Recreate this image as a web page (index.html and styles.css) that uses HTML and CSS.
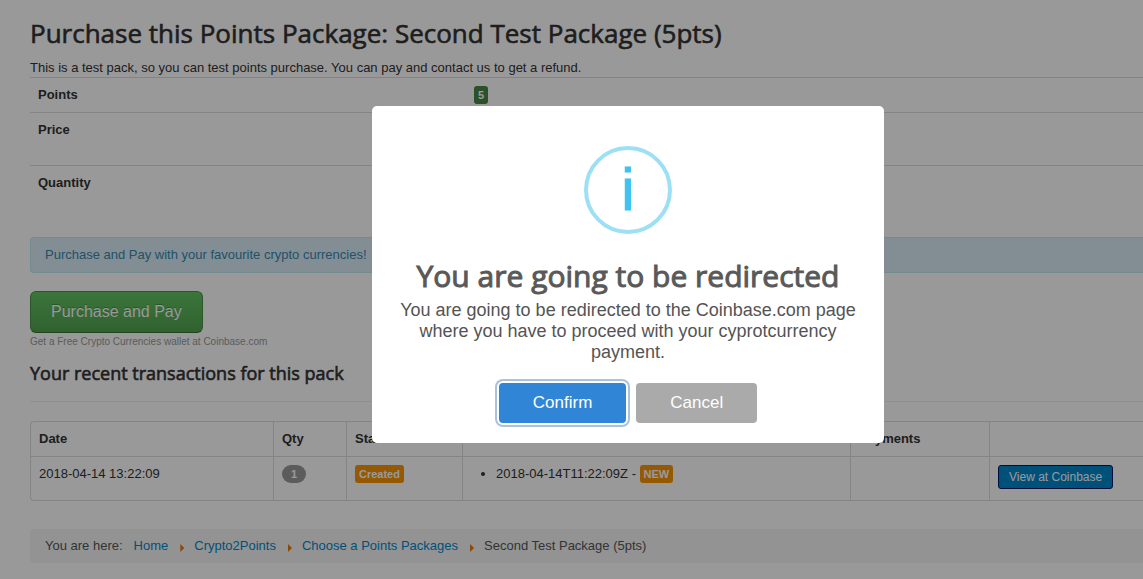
FILE: index.html
```html
<!DOCTYPE html>
<html lang="en">
	<head>
		<meta charset="utf-8">
		<title>Purchase this Points Package</title>
		<link rel="stylesheet" href="styles.css">
	</head>
	<body>
		<main class="content">
			<h2>Purchase this Points Package: Second Test Package (5pts)</h2>
			<p class="intro">This is a test pack, so you can test points purchase. You can pay and contact us to get a refund.</p>

			<table class="details">
				<tr>
					<th scope="row">Points</th>
					<td><span class="label label-success">5</span></td>
				</tr>
				<tr class="tall">
					<th scope="row">Price</th>
					<td></td>
				</tr>
				<tr class="tall">
					<th scope="row">Quantity</th>
					<td></td>
				</tr>
			</table>

			<div class="alert">Purchase and Pay with your favourite crypto currencies!</div>

			<button type="button" class="btn-pay">Purchase and Pay</button>
			<p class="hint">Get a Free Crypto Currencies wallet at Coinbase.com</p>

			<h4>Your recent transactions for this pack</h4>
			<hr>

			<table class="transactions">
				<thead>
					<tr>
						<th class="col-date">Date</th>
						<th class="col-qty">Qty</th>
						<th class="col-status">Status</th>
						<th class="col-timeline">Timeline</th>
						<th class="col-payments">Payments</th>
						<th></th>
					</tr>
				</thead>
				<tbody>
					<tr>
						<td>2018-04-14 13:22:09</td>
						<td><span class="badge">1</span></td>
						<td><span class="label label-warning">Created</span></td>
						<td>
							<ul>
								<li>2018-04-14T11:22:09Z - <span class="label label-warning">NEW</span></li>
							</ul>
						</td>
						<td></td>
						<td><a href="#" class="btn-view">View at Coinbase</a></td>
					</tr>
				</tbody>
			</table>

			<nav class="breadcrumb">
				<span class="here">You are here:</span>
				<a href="#">Home</a>
				<i class="arrow"></i>
				<a href="#">Crypto2Points</a>
				<i class="arrow"></i>
				<a href="#">Choose a Points Packages</a>
				<i class="arrow"></i>
				<span>Second Test Package (5pts)</span>
			</nav>
		</main>

		<div class="overlay">
			<div class="modal" role="dialog" aria-labelledby="modal-title">
				<div class="modal-icon">i</div>
				<h2 class="modal-title" id="modal-title">You are going to be redirected</h2>
				<p class="modal-text">You are going to be redirected to the Coinbase.com page where you have to proceed with your cyprotcurrency payment.</p>
				<div class="modal-buttons">
					<button type="button" class="confirm">Confirm</button>
					<button type="button" class="cancel">Cancel</button>
				</div>
			</div>
		</div>
	</body>
</html>
```

FILE: styles.css
```css
* {
	box-sizing: border-box;
	margin: 0;
	padding: 0;
}

body {
	font: 13px/18px "Liberation Sans", Arial, sans-serif;
	color: #333;
	background-color: #fff;
}

a {
	color: #08c;
	text-decoration: none;
}

h2, h4 {
	font-family: "Open Sans", sans-serif;
	font-weight: 400;
	-webkit-text-stroke: 0.6px currentColor;
}

.content {
	padding: 15px 0 16px 30px;
}

.content h2 {
	font-size: 26px;
	line-height: 36px;
	margin-bottom: 8px;
}

table {
	width: 100%;
	border-collapse: separate;
	border-spacing: 0;
	table-layout: fixed;
}

th, td {
	padding: 8px;
	border-top: 1px solid #ddd;
	text-align: left;
	vertical-align: top;
}

/* package details */
.details {
	margin-bottom: 19px;
}

.details th {
	width: 436px;
}

.details .tall {
	height: 53px;
}

.label, .badge {
	display: inline-block;
	padding: 2px 4px;
	font-size: 11px;
	line-height: 14px;
	font-weight: bold;
	color: #fff;
	border-radius: 3px;
}

.label-success {
	background-color: #468847;
}

.label-warning {
	background-color: #f89406;
}

.badge {
	padding: 2px 9px;
	border-radius: 9px;
	background-color: #999;
}

.alert {
	padding: 8px 14px;
	margin-bottom: 18px;
	border: 1px solid #bce8f1;
	border-right: 0;
	border-radius: 4px 0 0 4px;
	background-color: #d9edf7;
	color: #3a87ad;
}

.btn-pay {
	display: block;
	padding: 10px 20px;
	font: 16px/20px "Liberation Sans", Arial, sans-serif;
	color: #fff;
	text-shadow: 0 -1px 0 rgba(0, 0, 0, 0.25);
	border: 1px solid #499249;
	border-bottom-color: #387038;
	border-radius: 6px;
	background: linear-gradient(to bottom, #62c462, #51a351);
}

.hint {
	font-size: 10px;
	color: #999;
}

h4 {
	font-size: 18px;
	line-height: 20px;
	margin: 12px 0 18px;
}

hr {
	border: 0;
	border-top: 1px solid #eee;
	margin-bottom: 19px;
}

/* transactions */
.transactions {
	border: 1px solid #ddd;
	border-width: 0 0 1px 1px;
	border-radius: 4px 0 0 4px;
	margin-bottom: 28px;
}

.transactions th + th, .transactions td + td {
	border-left: 1px solid #ddd;
}

.transactions th:first-child {
	border-top-left-radius: 4px;
}

.col-date {
	width: 242px;
}

.col-qty {
	width: 73px;
}

.col-status {
	width: 116px;
}

.col-timeline {
	width: 388px;
}

.col-payments {
	width: 139px;
}

.transactions ul {
	padding-left: 25px;
	margin-bottom: 9px;
}

.btn-view {
	display: inline-block;
	padding: 2px 10px;
	font-size: 12px;
	color: #fff;
	border: 1px solid #001a60;
	border-radius: 3px;
	background-color: #08c;
}

.breadcrumb {
	display: flex;
	padding: 8px 15px;
	border-radius: 4px 0 0 4px;
	background-color: #f5f5f5;
	color: #555;
}

.breadcrumb .here {
	margin-right: 11px;
}

.arrow {
	width: 4px;
	height: 8px;
	margin: 7px 10px 0 12px;
	background-color: #f07800;
	clip-path: polygon(0 0, 100% 50%, 0 100%);
}

/* dialog */
.overlay {
	position: fixed;
	top: 0;
	right: 0;
	bottom: 0;
	left: 0;
	display: flex;
	justify-content: center;
	align-items: flex-start;
	padding: 106px 0 0 113px;
	background-color: rgba(0, 0, 0, 0.4);
}

.modal {
	width: 512px;
	padding: 40px 20px 20px;
	border-radius: 5px;
	background-color: #fff;
	text-align: center;
	color: #545454;
}

.modal-icon {
	width: 88px;
	height: 88px;
	margin: 0 auto 24px;
	border: 4px solid #9de0f6;
	border-radius: 50%;
	font-size: 60px;
	line-height: 80px;
	color: #3fc3ee;
	-webkit-text-stroke: 1px currentColor;
}

.modal-title {
	font-size: 30px;
	line-height: 36px;
	margin-bottom: 6px;
	color: #595959;
	-webkit-text-stroke-width: 1px;
}

.modal-text {
	font-size: 18px;
	line-height: 21px;
	margin-bottom: 20px;
}

.modal-buttons {
	display: flex;
	justify-content: center;
	gap: 10px;
}

.modal-buttons button {
	padding: 10px 34px;
	font: 17px/20px "Liberation Sans", Arial, sans-serif;
	color: #fff;
	border: 0;
	border-radius: 4px;
}

.modal-buttons .confirm {
	background-color: #3085d6;
	box-shadow: 0 0 0 2px #fff, 0 0 0 4px #a9c2dd;
}

.modal-buttons .cancel {
	background-color: #aaa;
}
```
